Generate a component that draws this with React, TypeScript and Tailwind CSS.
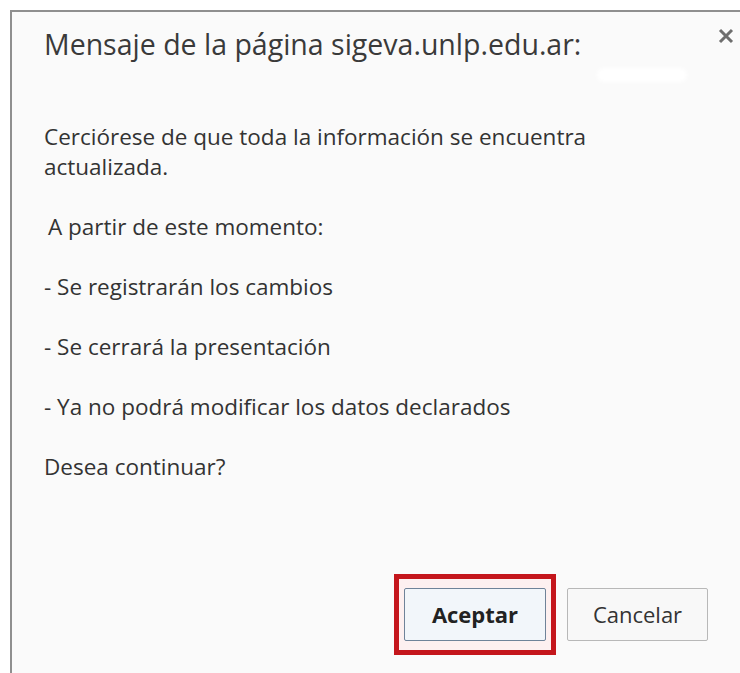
import { useState } from "react";

const lines = [
  "- Se registrarán los cambios",
  "- Se cerrará la presentación",
  "- Ya no podrá modificar los datos declarados",
  "Desea continuar?",
];

export default function App() {
  const [closed, setClosed] = useState(false);

  return (
    <div className="min-h-screen w-full bg-white pl-[10px] pt-[10px] font-['Open_Sans',sans-serif] text-[#333]">
      <div className="relative flex h-[663px] flex-col border-l-2 border-t-2 border-[#8f8f8f] bg-[#fafafa]">
        {/* cabecera */}
        <div className="pl-[32px] pt-[14px]">
          <h1 className="text-[28.5px] leading-[36px] text-[#3a3a3a]">
            Mensaje de la página sigeva.unlp.edu.ar:
          </h1>
        </div>
        <div className="absolute left-[585px] top-[56px] h-[14px] w-[90px] rounded-full bg-white blur-[2px]" />
        <button
          onClick={() => setClosed(!closed)}
          className="absolute right-[6px] top-[16px] flex h-[16px] w-[16px] items-center justify-center"
        >
          <svg width="16" height="16" viewBox="0 0 16 16">
            <path d="M2 2 L14 14 M14 2 L2 14" stroke="#6e6e6e" strokeWidth="3" />
          </svg>
        </button>

        {/* mensaje */}
        <div className="mt-[60px] pl-[32px] text-[22.5px] leading-[30px] text-[#333]">
          <p className="w-[570px]">
            Cerciórese de que toda la información se encuentra actualizada.
          </p>
          <p className="mt-[30px] pl-[4px]">A partir de este momento:</p>
          {lines.map((line, i) => (
            <p key={i} className="mt-[30px]">
              {line}
            </p>
          ))}
        </div>

        {/* botones */}
        <div className="mt-auto flex items-center justify-end gap-[11px] pb-[18px] pr-[32px]">
          <div className="border-[5px] border-[#c4161c] bg-[#fdf0f0] px-[5px] py-[9px]">
            <button className="h-[53px] w-[142px] rounded-[2px] border border-[#6f8399] bg-[#f2f6fa] text-[22px] font-bold text-[#222]">
              Aceptar
            </button>
          </div>
          <button className="h-[53px] w-[141px] rounded-[2px] border border-[#b8b8b8] bg-[#f8f8f8] text-[22px] text-[#333]">
            Cancelar
          </button>
        </div>
      </div>
    </div>
  );
}
